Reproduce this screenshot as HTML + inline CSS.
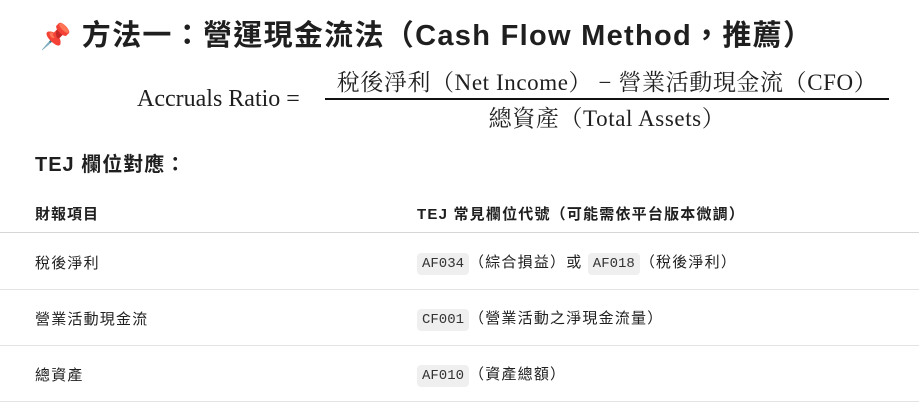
<!DOCTYPE html>
<html><head><meta charset="utf-8"><style>
body{margin:0;width:919px;height:413px;background:#fff;font-family:"Liberation Sans","Noto Sans CJK TC",sans-serif;color:#1f1f1f;overflow:hidden;position:relative}
.t{position:absolute;white-space:nowrap}
h1{position:absolute;left:40px;top:12px;margin:0;font-size:29px;font-weight:bold;white-space:nowrap;letter-spacing:1.3px}
.serif{font-family:"Liberation Serif","Noto Serif CJK SC",serif;font-size:23px}
.line{position:absolute;left:0;width:919px;height:1px;background:#e3e3e3}
code{font-family:"Liberation Mono",monospace;font-size:14px;background:#efefef;border-radius:4px;padding:3px 5px;color:#333;letter-spacing:0}
.c{font-size:15px;letter-spacing:1.2px}
</style></head><body>
<h1><span style="font-size:25px">📌</span> 方法一：營運現金流法（Cash Flow Method，推薦）</h1>
<div class="t serif" style="left:137px;top:86px;font-size:24px">Accruals Ratio =</div>
<div class="t serif" style="left:325px;top:64px;width:564px;text-align:center;letter-spacing:0.6px">稅後淨利（Net Income） − 營業活動現金流（CFO）</div>
<div style="position:absolute;left:325px;top:98px;width:564px;height:1.5px;background:#111"></div>
<div class="t serif" style="left:325px;top:100px;width:564px;text-align:center;letter-spacing:0.6px">總資產（Total Assets）</div>
<div class="t" style="left:35px;top:148px;font-size:20px;font-weight:bold;letter-spacing:1px">TEJ 欄位對應：</div>
<div class="t" style="left:35px;top:203px;font-size:15px;font-weight:bold;letter-spacing:1px">財報項目</div>
<div class="t" style="left:417px;top:203px;font-size:15px;font-weight:bold;letter-spacing:1.2px">TEJ 常見欄位代號（可能需依平台版本微調）</div>
<div class="line" style="top:232px;background:#d6d6d6"></div>
<div class="t c" style="left:35px;top:252px">稅後淨利</div>
<div class="t c" style="left:417px;top:251px"><code>AF034</code>（綜合損益）或 <code>AF018</code>（稅後淨利）</div>
<div class="line" style="top:289px"></div>
<div class="t c" style="left:35px;top:308px">營業活動現金流</div>
<div class="t c" style="left:417px;top:307px"><code>CF001</code>（營業活動之淨現金流量）</div>
<div class="line" style="top:345px"></div>
<div class="t c" style="left:35px;top:364px">總資產</div>
<div class="t c" style="left:417px;top:363px"><code>AF010</code>（資產總額）</div>
<div class="line" style="top:401px"></div>
</body></html>
